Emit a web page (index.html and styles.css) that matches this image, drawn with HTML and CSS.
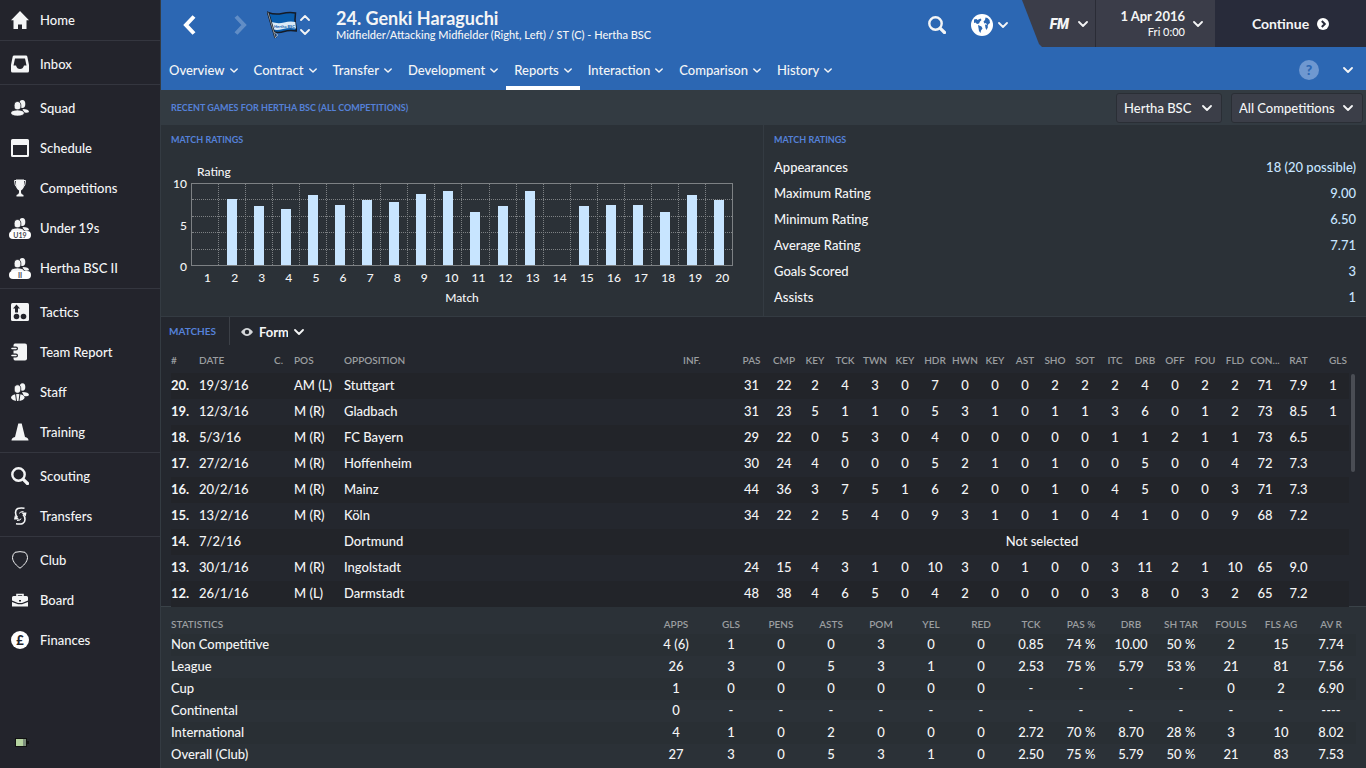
FILE: index.html
```html
<!DOCTYPE html>
<html lang="en">

<head>
  <meta charset="UTF-8">
  <meta name="viewport" content="width=device-width, initial-scale=1.0">
  <title>Genki Haraguchi - Reports</title>
  <link rel="stylesheet" href="styles.css">
</head>

<body>
  <!-- icons used more than once or in the menu -->
  <svg class="sprite" aria-hidden="true">
    <symbol id="chev" viewBox="0 0 10 6"><path d="M1 1l4 4 4-4" fill="none" stroke="currentColor" stroke-width="1.8" stroke-linecap="round" stroke-linejoin="round"/></symbol>
    <symbol id="home" viewBox="0 0 18 18"><path d="M9 0L18 9.2H15.5V18H11V13.5H7V18H2.5V9.2H0Z"/></symbol>
    <symbol id="inbox" viewBox="0 0 18 18"><path fill-rule="evenodd" d="M3 .5h12q1 0 1.3 1L18 10v6q0 1.500-1.5 1.5h-15Q0 17.5 0 16v-6L1.700 1.5Q2 .5 3 .5ZM4 3.5L2.500 10.5H5Q6 14 9 14T13 10.5H15.500L14 3.5Z"/></symbol>
    <symbol id="squad" viewBox="0 0 18 18"><ellipse cx="11.3" cy="5" rx="3" ry="4"/><path d="M11.5 10q6.5 0 6.5 3-1 1-5 .5z"/><ellipse cx="6.5" cy="6.8" rx="3.4" ry="4.3" stroke="#23242c" stroke-width=".8"/><ellipse cx="6.5" cy="14" rx="6.9" ry="3.1" stroke="#23242c" stroke-width=".8"/></symbol>
    <symbol id="schedule" viewBox="0 0 18 18"><path fill-rule="evenodd" d="M1.5 0h15Q18 0 18 1.5v15q0 1.5-1.5 1.5h-15Q0 18 0 16.5v-15Q0 0 1.5 0ZM2 6v10h14V6Z"/></symbol>
    <symbol id="cup" viewBox="0 0 18 18"><path d="M5 .5h8V5q0 5-3 6.5v2q0 1.500 2.500 2.500v1.500h-7V16Q8 15 8 13.500v-2Q5 10 5 5Z"/><path d="M5 1.500H3.500Q3.500 7 6.500 9M13 1.500h1.500Q14.500 7 11.500 9" fill="none" stroke="currentColor"/></symbol>
    <symbol id="tactics" viewBox="0 0 18 18"><rect width="18" height="18" rx="1.5"/><g fill="#23242c"><path d="M5.500 1.500L9 5.500H7V9.500H4V5.500H2Z"/><circle cx="5.5" cy="13.5" r="2.8"/><circle cx="12.5" cy="13.5" r="2.8"/></g></symbol>
    <symbol id="report" viewBox="0 0 18 18"><path d="M4 .5h10q2 0 2 2v13q0 2-2 2H4q-1.500 0-1.500-2v-13q0-2 1.500-2z"/><path d="M0 5.500h5M0 12.500h5" stroke="#23242c" stroke-width="4" stroke-linecap="round"/><path d="M1 5.500h4M1 12.500h4" stroke="currentColor" stroke-width="1.6" stroke-linecap="round"/></symbol>
    <symbol id="staff" viewBox="0 0 18 18"><ellipse cx="11.5" cy="4" rx="2.8" ry="3.8"/><path d="M11 9q7 0 7 3-1 2-5 1z"/><ellipse cx="6.5" cy="6" rx="3.3" ry="4.2" stroke="#23242c" stroke-width=".8"/><ellipse cx="6.8" cy="14.5" rx="6.8" ry="3.5"/><path d="M4.500 10.500l1 7.500M9 10.500L8 18" stroke="#23242c"/></symbol>
    <symbol id="cone" viewBox="0 0 18 18"><path d="M7.300.5h3.400L14 14q3.500.8 3.500 3.500H.5Q.5 14.800 4 14Z"/></symbol>
    <symbol id="search" viewBox="0 0 18 18"><g fill="none" stroke="currentColor"><circle cx="7.5" cy="7.5" r="6.2" stroke-width="2.4"/><path d="M12.300 12.300L16.500 16.500" stroke-width="3.2" stroke-linecap="round"/></g></symbol>
    <symbol id="transfers" viewBox="0 0 18 18"><g fill="none" stroke="currentColor" stroke-width="1.6"><path d="M13.500 1.200Q4.500 -.2 4.500 5.500q0 3 2 5"/><path d="M5 16.800Q14 18.200 14 12.500q0-3-2-5"/></g><path d="M3 12.500L3.800 8.500 8.500 12.500ZM15.500 5.500L14.700 9.500 10 5.500Z"/><path d="M8.500 6.500q0-2 4-2M10 11.500q0 2-4 2" fill="none" stroke="currentColor"/></symbol>
    <symbol id="club" viewBox="0 0 18 18"><path d="M4 1.300Q9 0 14 1.300 16.500 3.500 16.500 6.500C16.500 11 12 15 9 17.200 6 15 1.500 11 1.500 6.500Q1.500 3.500 4 1.300Z" fill="none" stroke="currentColor"/></symbol>
    <symbol id="board" viewBox="0 0 18 18"><path d="M6 6V3.500h6V6" fill="none" stroke="currentColor" stroke-width="1.6"/><path d="M2.500 5h13q1.500 0 1.500 1.500v3L11 12H7L1 9.500v-3Q1 5 2.500 5ZM1 11l6 2.300h4L17 11v4.500H1Z"/><rect x="8" y="9" width="2" height="1.5" fill="#23242c"/></symbol>
  </svg>

  <div class="app">
    <aside class="sidebar">
      <nav>
        <ul>
          <li><a href="#"><svg><use href="#home"/></svg>Home</a></li>
        </ul>
        <ul>
          <li><a href="#"><svg><use href="#inbox"/></svg>Inbox</a></li>
        </ul>
        <ul>
          <li><a href="#"><svg><use href="#squad"/></svg>Squad</a></li>
          <li><a href="#"><svg><use href="#schedule"/></svg>Schedule</a></li>
          <li><a href="#"><svg><use href="#cup"/></svg>Competitions</a></li>
          <li><a href="#"><span class="team"><svg><use href="#squad"/></svg><b>U19</b></span>Under 19s</a></li>
          <li><a href="#"><span class="team"><svg><use href="#squad"/></svg><b>II</b></span>Hertha BSC II</a></li>
        </ul>
        <ul>
          <li><a href="#"><svg><use href="#tactics"/></svg>Tactics</a></li>
          <li><a href="#"><svg><use href="#report"/></svg>Team Report</a></li>
          <li><a href="#"><svg><use href="#staff"/></svg>Staff</a></li>
          <li><a href="#"><svg><use href="#cone"/></svg>Training</a></li>
        </ul>
        <ul>
          <li><a href="#"><svg><use href="#search"/></svg>Scouting</a></li>
          <li><a href="#"><svg><use href="#transfers"/></svg>Transfers</a></li>
        </ul>
        <ul>
          <li><a href="#"><svg><use href="#club"/></svg>Club</a></li>
          <li><a href="#"><svg><use href="#board"/></svg>Board</a></li>
          <li><a href="#"><span class="coin">£</span>Finances</a></li>
        </ul>
      </nav>
      <svg class="battery" viewBox="0 0 14 10"><path d="M0 0h12v3h2v3h-2v3H0z" fill="#111"/><path d="M1 1h7v7H1z" fill="#b5d3a0"/><path d="M8 1h3v7H8z" fill="#7d8f7b"/></svg>
    </aside>

    <main>
      <header>
        <div class="top">
          <button class="back" aria-label="Back"><svg viewBox="0 0 14 22"><path d="M11 2.500L3 11l8 8.500"/></svg></button>
          <button class="back next" aria-label="Forward"><svg viewBox="0 0 14 22"><path d="M3 2.500L11 11l-8 8.500"/></svg></button>
          <svg class="flag" viewBox="0 0 30 29">
            <path d="M1 1.500Q8 4 15 2.500T28.500 2L28 9 29.500 20Q22 19 17 20.500T7 21Z" fill="#0a5cab" stroke="#151b26" stroke-width="1.5"/>
            <path d="M4.500 11Q11 13 17 11.500T28.300 11L29 17.500Q22 16.500 16 18T6.500 18.500Z" fill="#dbeaf6"/>
            <text x="7" y="17" font-size="4" font-weight="700" fill="#0a5cab">Hertha BSC</text>
            <path d="M1 1.500L8.500 27" stroke="#151b26" stroke-width="2.2"/>
            <path d="M1 1.500L8.500 27M7 21l4 3-3 3" stroke="#a9b3bb" stroke-width=".8" fill="none"/>
          </svg>
          <div class="updown">
            <button aria-label="Previous player"><svg class="flip"><use href="#chev"/></svg></button>
            <button aria-label="Next player"><svg><use href="#chev"/></svg></button>
          </div>
          <div class="title">
            <h1>24. Genki Haraguchi</h1>
            <p>Midfielder/Attacking Midfielder (Right, Left) / ST (C) - Hertha BSC</p>
          </div>
          <button class="find" aria-label="Search"><svg><use href="#search"/></svg></button>
          <button class="world" aria-label="World">
            <svg class="globe" viewBox="0 0 22 22"><circle cx="11" cy="11" r="11" fill="#fff"/><g fill="#2c67b3"><path d="M3 5.500L5.500 5l1 1 3-1.500L10.500 6 9 7.500 8 9.500l-2 .5L4.500 8.500 3 9zM7 11l3.500 1.500 1 2L10 16.500l-.5 2.500-1.500-2-.5-3zM14.500 3.500l2 .5 2 2 .5 3-1.500 1-1 2-1.500-3-1.500.5-1-2 1.500-1.500zM14 10.500l2 .5 1 2-1.500 3-1-2z"/></g></svg>
            <svg class="chev"><use href="#chev"/></svg>
          </button>
          <div class="tools">
            <button class="fm"><i>FM</i><svg class="chev"><use href="#chev"/></svg></button>
            <button class="date"><span><b>1 Apr 2016</b>Fri 0:00</span><svg class="chev"><use href="#chev"/></svg></button>
            <button class="continue">Continue <svg viewBox="0 0 12 12"><circle cx="6" cy="6" r="6" fill="#fff"/><path d="M4.800 3L7.800 6l-3 3" fill="none" stroke="#282b3a" stroke-width="2"/></svg></button>
          </div>
        </div>
        <nav class="tabs">
          <button>Overview<svg><use href="#chev"/></svg></button>
          <button>Contract<svg><use href="#chev"/></svg></button>
          <button>Transfer<svg><use href="#chev"/></svg></button>
          <button>Development<svg><use href="#chev"/></svg></button>
          <button class="active">Reports<svg><use href="#chev"/></svg></button>
          <button>Interaction<svg><use href="#chev"/></svg></button>
          <button>Comparison<svg><use href="#chev"/></svg></button>
          <button>History<svg><use href="#chev"/></svg></button>
          <button class="help">?</button>
          <button class="more" aria-label="More"><svg class="chev"><use href="#chev"/></svg></button>
        </nav>
      </header>

      <div class="strip">
        <h2>Recent games for Hertha BSC (All Competitions)</h2>
        <label class="pick"><select aria-label="Team"><option>Hertha BSC</option></select><svg class="chev"><use href="#chev"/></svg></label>
        <label class="pick wide"><select aria-label="Competition"><option>All Competitions</option></select><svg class="chev"><use href="#chev"/></svg></label>
      </div>

      <div class="panels">
        <section class="ratings">
          <h2>Match Ratings</h2>
          <p class="rating">Rating</p>
          <div class="chart">
            <div class="scale"><span>10</span><span>5</span><span>0</span></div>
            <div class="plot">
              <div class="lines"><i></i><i></i><i></i><i></i><i></i></div>
              <span><i style="height: 0%"></i></span>
              <span><i style="height: 81%"></i></span>
              <span><i style="height: 73%"></i></span>
              <span><i style="height: 69%"></i></span>
              <span><i style="height: 86%"></i></span>
              <span><i style="height: 74%"></i></span>
              <span><i style="height: 80%"></i></span>
              <span><i style="height: 78%"></i></span>
              <span><i style="height: 88%"></i></span>
              <span><i style="height: 91%"></i></span>
              <span><i style="height: 65%"></i></span>
              <span><i style="height: 73%"></i></span>
              <span><i style="height: 91%"></i></span>
              <span><i style="height: 0%"></i></span>
              <span><i style="height: 73%"></i></span>
              <span><i style="height: 74%"></i></span>
              <span><i style="height: 74%"></i></span>
              <span><i style="height: 65%"></i></span>
              <span><i style="height: 86%"></i></span>
              <span><i style="height: 80%"></i></span>
            </div>
          </div>
          <div class="numbers">
            <span>1</span><span>2</span><span>3</span><span>4</span><span>5</span>
            <span>6</span><span>7</span><span>8</span><span>9</span><span>10</span>
            <span>11</span><span>12</span><span>13</span><span>14</span><span>15</span>
            <span>16</span><span>17</span><span>18</span><span>19</span><span>20</span>
          </div>
          <p class="match">Match</p>
        </section>
        <section class="summary">
          <h2>Match Ratings</h2>
          <dl>
            <div><dt>Appearances</dt><dd>18 (20 possible)</dd></div>
            <div><dt>Maximum Rating</dt><dd>9.00</dd></div>
            <div><dt>Minimum Rating</dt><dd>6.50</dd></div>
            <div><dt>Average Rating</dt><dd>7.71</dd></div>
            <div><dt>Goals Scored</dt><dd>3</dd></div>
            <div><dt>Assists</dt><dd>1</dd></div>
          </dl>
        </section>
      </div>

      <section class="matches">
        <div class="bar">
          <h2>Matches</h2>
          <label class="view">
            <svg class="eye" viewBox="0 0 12 8"><path d="M0 4Q6-4 12 4 6 12 0 4Z" fill="#d5d7da"/><circle cx="6" cy="4" r="2.2" fill="#24272e"/></svg>
            <select aria-label="View"><option>Form</option></select><svg class="chev"><use href="#chev"/></svg>
          </label>
        </div>
        <div class="scroll">
          <table>
            <colgroup>
              <col class="no"><col class="day"><col class="c"><col class="pos"><col><col class="inf"><col class="pas"><col class="cmp">
              <col span="16" class="num"><col class="rat"><col class="gls">
            </colgroup>
            <thead>
              <tr>
                <th>#</th><th>Date</th><th>C.</th><th>Pos</th><th>Opposition</th><th>Inf.</th>
                <th>Pas</th><th>Cmp</th><th>Key</th><th>Tck</th><th>Twn</th><th>Key</th><th>Hdr</th><th>Hwn</th><th>Key</th><th>Ast</th>
                <th>Sho</th><th>Sot</th><th>Itc</th><th>Drb</th><th>Off</th><th>Fou</th><th>Fld</th><th>Con...</th><th>Rat</th><th>Gls</th>
              </tr>
            </thead>
            <tbody>
              <tr>
                <td>20.</td><td>19/3/16</td><td></td><td>AM (L)</td><td>Stuttgart</td><td></td>
                <td>31</td><td>22</td><td>2</td><td>4</td><td>3</td><td>0</td><td>7</td><td>0</td><td>0</td><td>0</td>
                <td>2</td><td>2</td><td>2</td><td>4</td><td>0</td><td>2</td><td>2</td><td>71</td><td>7.9</td><td>1</td>
              </tr>
              <tr>
                <td>19.</td><td>12/3/16</td><td></td><td>M (R)</td><td>Gladbach</td><td></td>
                <td>31</td><td>23</td><td>5</td><td>1</td><td>1</td><td>0</td><td>5</td><td>3</td><td>1</td><td>0</td>
                <td>1</td><td>1</td><td>3</td><td>6</td><td>0</td><td>1</td><td>2</td><td>73</td><td>8.5</td><td>1</td>
              </tr>
              <tr>
                <td>18.</td><td>5/3/16</td><td></td><td>M (R)</td><td>FC Bayern</td><td></td>
                <td>29</td><td>22</td><td>0</td><td>5</td><td>3</td><td>0</td><td>4</td><td>0</td><td>0</td><td>0</td>
                <td>0</td><td>0</td><td>1</td><td>1</td><td>2</td><td>1</td><td>1</td><td>73</td><td>6.5</td><td></td>
              </tr>
              <tr>
                <td>17.</td><td>27/2/16</td><td></td><td>M (R)</td><td>Hoffenheim</td><td></td>
                <td>30</td><td>24</td><td>4</td><td>0</td><td>0</td><td>0</td><td>5</td><td>2</td><td>1</td><td>0</td>
                <td>1</td><td>0</td><td>0</td><td>5</td><td>0</td><td>0</td><td>4</td><td>72</td><td>7.3</td><td></td>
              </tr>
              <tr>
                <td>16.</td><td>20/2/16</td><td></td><td>M (R)</td><td>Mainz</td><td></td>
                <td>44</td><td>36</td><td>3</td><td>7</td><td>5</td><td>1</td><td>6</td><td>2</td><td>0</td><td>0</td>
                <td>1</td><td>0</td><td>4</td><td>5</td><td>0</td><td>0</td><td>3</td><td>71</td><td>7.3</td><td></td>
              </tr>
              <tr>
                <td>15.</td><td>13/2/16</td><td></td><td>M (R)</td><td>Köln</td><td></td>
                <td>34</td><td>22</td><td>2</td><td>5</td><td>4</td><td>0</td><td>9</td><td>3</td><td>1</td><td>0</td>
                <td>1</td><td>0</td><td>4</td><td>1</td><td>0</td><td>0</td><td>9</td><td>68</td><td>7.2</td><td></td>
              </tr>
              <tr>
                <td>14.</td><td>7/2/16</td><td></td><td></td><td>Dortmund</td><td></td>
                <td colspan="20">Not selected</td>
              </tr>
              <tr>
                <td>13.</td><td>30/1/16</td><td></td><td>M (R)</td><td>Ingolstadt</td><td></td>
                <td>24</td><td>15</td><td>4</td><td>3</td><td>1</td><td>0</td><td>10</td><td>3</td><td>0</td><td>1</td>
                <td>0</td><td>0</td><td>3</td><td>11</td><td>2</td><td>1</td><td>10</td><td>65</td><td>9.0</td><td></td>
              </tr>
              <tr>
                <td>12.</td><td>26/1/16</td><td></td><td>M (L)</td><td>Darmstadt</td><td></td>
                <td>48</td><td>38</td><td>4</td><td>6</td><td>5</td><td>0</td><td>4</td><td>2</td><td>0</td><td>0</td>
                <td>0</td><td>0</td><td>3</td><td>8</td><td>0</td><td>3</td><td>2</td><td>65</td><td>7.2</td><td></td>
              </tr>
            </tbody>
          </table>
          <div class="thumb"></div>
        </div>
      </section>

      <section class="stats">
        <table>
          <colgroup>
            <col><col class="apps"><col span="13" class="stat">
          </colgroup>
          <thead>
            <tr>
              <th>Statistics</th><th>Apps</th><th>Gls</th><th>Pens</th><th>Asts</th><th>POM</th><th>Yel</th><th>Red</th>
              <th>Tck</th><th>Pas %</th><th>Drb</th><th>Sh Tar</th><th>Fouls</th><th>Fls Ag</th><th>Av R</th>
            </tr>
          </thead>
          <tbody>
            <tr>
              <td>Non Competitive</td><td>4 (6)</td><td>1</td><td>0</td><td>0</td><td>3</td><td>0</td><td>0</td>
              <td>0.85</td><td>74 %</td><td>10.00</td><td>50 %</td><td>2</td><td>15</td><td>7.74</td>
            </tr>
            <tr>
              <td>League</td><td>26</td><td>3</td><td>0</td><td>5</td><td>3</td><td>1</td><td>0</td>
              <td>2.53</td><td>75 %</td><td>5.79</td><td>53 %</td><td>21</td><td>81</td><td>7.56</td>
            </tr>
            <tr>
              <td>Cup</td><td>1</td><td>0</td><td>0</td><td>0</td><td>0</td><td>0</td><td>0</td>
              <td>-</td><td>-</td><td>-</td><td>-</td><td>0</td><td>2</td><td>6.90</td>
            </tr>
            <tr>
              <td>Continental</td><td>0</td><td>-</td><td>-</td><td>-</td><td>-</td><td>-</td><td>-</td>
              <td>-</td><td>-</td><td>-</td><td>-</td><td>-</td><td>-</td><td>----</td>
            </tr>
            <tr>
              <td>International</td><td>4</td><td>1</td><td>0</td><td>2</td><td>0</td><td>0</td><td>0</td>
              <td>2.72</td><td>70 %</td><td>8.70</td><td>28 %</td><td>3</td><td>10</td><td>8.02</td>
            </tr>
            <tr>
              <td>Overall (Club)</td><td>27</td><td>3</td><td>0</td><td>5</td><td>3</td><td>1</td><td>0</td>
              <td>2.50</td><td>75 %</td><td>5.79</td><td>50 %</td><td>21</td><td>83</td><td>7.53</td>
            </tr>
          </tbody>
        </table>
      </section>
    </main>
  </div>
</body>

</html>
```
FILE: styles.css
```css
* {
  box-sizing: border-box;
  margin: 0;
  padding: 0;
}

body {
  background: #2b3137;
  color: #f4f5f6;
  font: 500 13px/16px Lato, "Open Sans", sans-serif;
}

.sprite {
  display: none;
}

svg {
  fill: currentColor;
  flex: none;
}

button,
select {
  background: none;
  border: 0;
  color: inherit;
  font: inherit;
  cursor: pointer;
}

h2 {
  color: #5581d9;
  font-size: 9px;
  font-weight: 700;
  line-height: 16px;
  text-transform: uppercase;
}

.chev {
  width: 10px;
  height: 6px;
}

.app {
  display: flex;
  min-height: 100vh;
}

/* left menu */
.sidebar {
  display: flex;
  flex-direction: column;
  justify-content: space-between;
  width: 160px;
  flex: none;
  background: #23242c;
}

.sidebar ul {
  list-style: none;
}

.sidebar ul + ul {
  border-top: 1px solid #34363f;
  padding-top: 3px;
}

.sidebar a {
  display: flex;
  align-items: center;
  gap: 11px;
  height: 40px;
  padding-left: 11px;
  color: inherit;
  text-decoration: none;
}

.sidebar a svg {
  width: 18px;
  height: 18px;
}

.team {
  display: flex;
  flex-direction: column;
  align-items: center;
  width: 22px;
  margin: 0 -2px;
}

.team b {
  width: 22px;
  height: 8px;
  margin-top: -4px;
  border-radius: 4px;
  background: #fff;
  color: #4a4b52;
  font-size: 7px;
  line-height: 8px;
  text-align: center;
  z-index: 1;
}

.coin {
  width: 18px;
  height: 18px;
  border-radius: 50%;
  background: #fff;
  color: #23242c;
  font-weight: 900;
  line-height: 18px;
  text-align: center;
}

.battery {
  width: 14px;
  height: 10px;
  margin: 0 0 20px 15px;
}

main {
  flex: 1;
  min-width: 0;
  border-left: 1px solid #343b42;
}

/* blue header */
header {
  background: #2c67b3;
}

.top {
  display: flex;
  align-items: center;
  height: 50px;
  padding-left: 22px;
}

.back svg {
  display: block;
  width: 14px;
  height: 22px;
  fill: none;
  stroke: #fff;
  stroke-width: 4;
}

.next {
  margin: 0 20px 0 36px;
  opacity: 0.25;
}

.flag {
  width: 30px;
  height: 29px;
}

.updown {
  display: flex;
  flex-direction: column;
  gap: 8px;
  margin: 0 26px 0 3px;
}

.updown svg {
  display: block;
  width: 10px;
  height: 6px;
}

.flip {
  transform: rotate(180deg);
}

.title {
  flex: 1;
}

h1 {
  font-size: 18px;
  font-weight: 700;
  line-height: 20px;
}

.title p {
  font-size: 11px;
  line-height: 14px;
}

.find svg {
  display: block;
  width: 18px;
  height: 18px;
}

.world {
  display: flex;
  align-items: center;
  gap: 5px;
  margin: 0 14px 0 25px;
}

.globe {
  width: 22px;
  height: 22px;
}

.tools {
  display: flex;
  align-self: flex-start;
  height: 47px;
  background: #3b3d49;
  clip-path: polygon(0 0, 100% 0, 100% 100%, 20px 100%, 17px 44px);
}

.tools button {
  display: flex;
  align-items: center;
  justify-content: flex-end;
}

.fm {
  gap: 9px;
  width: 73px;
  padding-right: 7px;
}

.fm i {
  font-family: Roboto, sans-serif;
  font-size: 14px;
  font-weight: 900;
}

.date {
  gap: 8px;
  width: 120px;
  padding-right: 12px;
  border-left: 1px solid #2a2c36;
  font-size: 11px;
  text-align: right;
}

.date b {
  display: block;
  font-size: 13px;
}

.tools .continue {
  justify-content: center;
  gap: 8px;
  width: 151px;
  background: #282b3a;
  font-size: 14px;
  font-weight: 700;
}

.continue svg {
  width: 12px;
  height: 12px;
}

.tabs {
  display: flex;
  height: 40px;
}

.tabs button {
  display: flex;
  align-items: center;
  gap: 5px;
  padding: 0 8px;
}

.tabs button svg {
  width: 8px;
  height: 5px;
}

.tabs .active {
  box-shadow: inset 0 -4px #fff;
}

.tabs .help {
  align-self: center;
  justify-content: center;
  width: 20px;
  height: 20px;
  margin-left: auto;
  padding: 0;
  border-radius: 50%;
  background: #6f98d0;
  color: #2c67b3;
  font-size: 14px;
  font-weight: 900;
}

.tabs .more {
  padding: 0 13px 0 24px;
}

.tabs .more svg {
  width: 10px;
  height: 6px;
}

/* title strip with the two filters */
.strip {
  display: flex;
  align-items: center;
  gap: 9px;
  height: 35px;
  padding: 0 3px 0 10px;
  background: #333b42;
}

.strip h2 {
  flex: 1;
}

.pick {
  display: flex;
  align-items: center;
  height: 30px;
  width: 106px;
  padding: 0 9px 0 7px;
  border: 1px solid #2a2e35;
  border-radius: 3px;
  background: #3b3e48;
}

.wide {
  width: 132px;
}

select {
  appearance: none;
  flex: 1;
  min-width: 0;
}

/* chart and summary */
.panels {
  display: flex;
  height: 192px;
  border-bottom: 1px solid #343b42;
}

.panels section {
  flex: 1;
  padding: 7px 10px 0;
}

.rating {
  margin: 16px 0 3px 26px;
}

.rating,
.match,
.scale,
.numbers {
  font-size: 12px;
}

.chart {
  display: flex;
  gap: 4px;
  height: 83px;
  padding-right: 20px;
}

.scale {
  display: flex;
  flex-direction: column;
  justify-content: space-between;
  width: 16px;
  margin: -7px 0 -9px;
  text-align: right;
}

.plot {
  display: flex;
  flex: 1;
  position: relative;
  border: 1px solid #7d8184;
}

.plot span {
  display: flex;
  flex: 1;
  align-items: flex-end;
  justify-content: center;
}

.plot span + span {
  border-left: 1px dotted #7d8184;
}

.plot span i {
  width: 10px;
  background: #c8e5ff;
  z-index: 1;
}

/* dotted lines behind the bars */
.lines {
  display: flex;
  flex-direction: column;
  position: absolute;
  inset: 0;
}

.lines i {
  flex: 1;
}

.lines i + i {
  border-top: 1px dotted #7d8184;
}

.numbers {
  display: flex;
  margin: 4px 17px 0 23px;
}

.numbers span {
  flex: 1;
  text-align: center;
}

.match {
  margin-top: 4px;
  text-align: center;
}

.panels .summary {
  border-left: 1px solid #343b42;
}

.summary dl {
  margin-top: 6px;
}

.summary dl div {
  display: flex;
  justify-content: space-between;
  line-height: 26px;
}

.summary dd {
  color: #c8e5ff;
}

/* tables */
table {
  width: 100%;
  border-collapse: collapse;
  table-layout: fixed;
}

th {
  color: #9b9ea0;
  font-size: 10px;
  font-weight: 600;
  text-transform: uppercase;
  white-space: nowrap;
}

td {
  padding-bottom: 2px;
  white-space: nowrap;
  text-align: center;
}

.matches {
  height: 289px;
  background: #24272e;
}

.bar {
  display: flex;
  height: 30px;
  padding-left: 8px;
}

.bar h2 {
  width: 61px;
  height: 28px;
  border-right: 1px solid #3c4047;
  font-size: 10px;
  line-height: 29px;
}

.view {
  display: flex;
  align-items: center;
  gap: 6px;
  width: 63px;
  margin-left: 11px;
  font-weight: 700;
}

.eye {
  width: 12px;
  height: 8px;
}

.scroll {
  display: flex;
  gap: 2px;
  padding: 0 11px 0 10px;
}

.thumb {
  width: 4px;
  height: 98px;
  margin-top: 27px;
  border-radius: 2px;
  background: #4a4d54;
  flex: none;
}

.matches th,
.matches td {
  height: 26px;
}

.matches tbody tr:nth-child(odd) {
  background: #222429;
}

.matches th:nth-child(-n+6),
.matches td:nth-child(-n+6) {
  text-align: left;
}

.matches td:first-child {
  font-weight: 700;
}

.matches th:last-child {
  text-align: right;
  padding-right: 2px;
}

.no { width: 28px; }
.day { width: 75px; }
.c { width: 20px; }
.pos { width: 50px; }
.inf { width: 52px; }
.pas { width: 33px; }
.cmp { width: 32px; }
.num { width: 30px; }
.rat { width: 37px; }
.gls { width: 32px; }

.stats {
  padding: 6px 10px 2px;
  border-top: 1px solid #3a4248;
  background: #2b3137;
}

.apps { width: 60px; }
.stat { width: 50px; }

.stats th {
  height: 21px;
}

.stats td {
  height: 22px;
}

.stats tbody tr:nth-child(odd) {
  background: #292f34;
}

.stats th:first-child,
.stats td:first-child {
  text-align: left;
}
```
